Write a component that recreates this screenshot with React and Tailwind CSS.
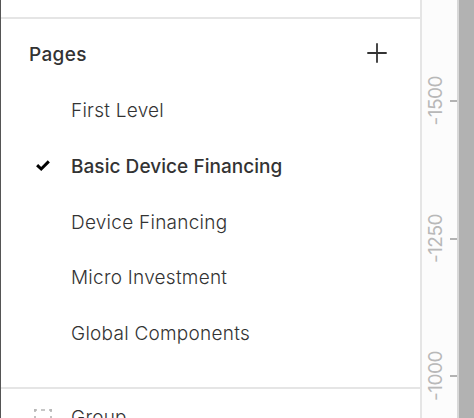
import React from 'react';

const pages = [
  { name: 'First Level' },
  { name: 'Basic Device Financing', active: true },
  { name: 'Device Financing' },
  { name: 'Micro Investment' },
  { name: 'Global Components' },
];

const ticks = ['-1500', '-1250', '-1000'];

function PlusIcon() {
  return (
    <svg width="20" height="20" viewBox="0 0 20 20" fill="none" stroke="#333333" strokeWidth="1.8">
      <path d="M10 0.3V19.7M0.3 10H19.7" />
    </svg>
  );
}

function CheckIcon() {
  return (
    <svg className="mb-px" width="14" height="12" viewBox="0 0 14 12" fill="none" stroke="#000000" strokeWidth="3">
      <path d="M1.1 5.1L5.2 9L12.8 1.4" />
    </svg>
  );
}

function GroupIcon() {
  return (
    <svg width="18" height="18" viewBox="0 0 18 18" fill="none" stroke="#b5b5b5" strokeWidth="1.6">
      <path d="M0 1H3M7 1H11M15 1H18M1 0V3M1 7V11M1 15V18M17 0V3M17 7V11M17 15V18M0 17H3M7 17H11M15 17H18" />
    </svg>
  );
}

function PageRow({ page }) {
  return (
    <li className="flex h-[55.8px] items-center">
      <div className="w-[35px] shrink-0">{page.active && <CheckIcon />}</div>
      <span className={page.active ? 'font-medium tracking-[0.05px]' : 'font-light tracking-[0.25px]'}>{page.name}</span>
    </li>
  );
}

function Ruler() {
  return (
    <div className="w-[39px] shrink-0 border-l-2 border-r-2 border-l-[#e5e5e5] border-r-[#d8d8d8] bg-[#fcfcfc] pt-8">
      {ticks.map((tick) => (
        <div key={tick} className="flex h-[137.4px] items-center justify-between pl-0.5">
          <span className="rotate-180 text-[19px] leading-6 tracking-[-0.5px] text-[#b8b8b8] [writing-mode:vertical-rl]">
            {tick}
          </span>
          <div className="mt-px h-0.5 w-[7px] bg-[#b3b3b3]"></div>
        </div>
      ))}
    </div>
  );
}

function App() {
  return (
    <div className="flex h-[418px] w-[474px] overflow-hidden bg-white font-['Inter',sans-serif] text-[19px] leading-6 text-[#333333]">
      <div className="w-px shrink-0 bg-[#555555]"></div>
      <div className="flex w-[419px] shrink-0 flex-col">
        <div className="h-[17px] shrink-0"></div>
        <section className="h-[372px] shrink-0 border-y-2 border-[#e5e5e5]">
          <div className="flex h-16 items-start justify-between pt-6 pr-[33px] pl-7">
            <h2 className="font-medium tracking-[0.35px]">Pages</h2>
            <PlusIcon />
          </div>
          <ul className="pt-[0.1px] pl-[35px]">
            {pages.map((page) => (
              <PageRow key={page.name} page={page} />
            ))}
          </ul>
        </section>
        <div className="flex h-[57px] shrink-0 items-center pl-[33px]">
          <div className="w-[37px] shrink-0">
            <GroupIcon />
          </div>
          <span className="font-light tracking-[0.25px]">Group</span>
        </div>
      </div>
      <Ruler />
      <div className="flex-1 bg-[#b2b2b2]"></div>
    </div>
  );
}

export default App;
